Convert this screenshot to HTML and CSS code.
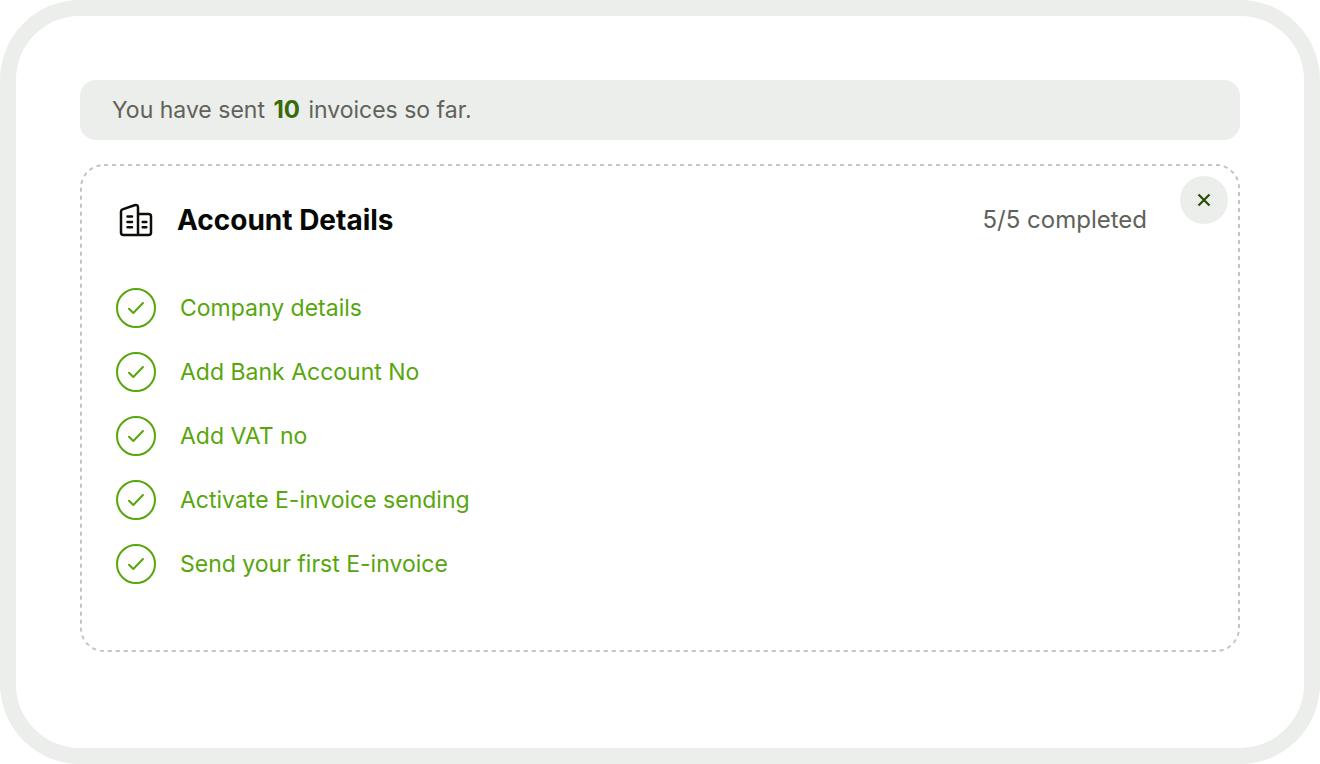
FILE: index.html
```html
<!DOCTYPE html>
<html lang="en">
<head>
<meta charset="utf-8">
<title>Account Details</title>
<link rel="stylesheet" href="styles.css">
</head>
<body>
<svg class="symbols" aria-hidden="true">
  <symbol id="check" viewBox="0 0 40 40">
    <circle cx="20" cy="20" r="19"/>
    <path d="M13 20.800L17.300 25L27 15"/>
  </symbol>
</svg>
<main class="panel">
  <p class="notice">You have sent <strong class="count">10</strong> invoices so far.</p>
  <section class="card">
    <svg class="outline" aria-hidden="true"><rect class="outline-rect" rx="23"/></svg>
    <header class="card-header">
      <svg class="building" viewBox="0 0 40 40" aria-hidden="true">
        <path d="M22 35H7.500Q5 35 5 32.500V11.500Q5 10 6.500 9.400L18.500 5.200Q22 4.200 22 7.500V35H32.500Q35 35 35 32.500V16.500Q35 14 32.500 14H22"/>
        <path d="M11.500 16.500H16M11.500 22H16M11.500 27.200H16M26.700 22H30.300M26.700 27.200H30.300"/>
      </svg>
      <h1 class="title">Account Details</h1>
      <span class="progress">5/5 completed</span>
    </header>
    <button class="close" type="button" aria-label="Close">
      <svg class="close-icon" viewBox="0 0 16 16" aria-hidden="true"><path d="M2.500 2.500L13.500 13.500M13.500 2.500L2.500 13.500"/></svg>
    </button>
    <ul class="steps">
      <li class="step"><svg class="check"><use href="#check"/></svg>Company details</li>
      <li class="step"><svg class="check"><use href="#check"/></svg>Add Bank Account No</li>
      <li class="step"><svg class="check"><use href="#check"/></svg>Add VAT no</li>
      <li class="step"><svg class="check"><use href="#check"/></svg>Activate E-invoice sending</li>
      <li class="step"><svg class="check"><use href="#check"/></svg>Send your first E-invoice</li>
    </ul>
  </section>
</main>
</body>
</html>
```
FILE: styles.css
```css
* { box-sizing: border-box; }
body {
  margin: 0;
  background: #fff;
  color: #5f625b;
  font: 23px/32px Inter, "Liberation Sans", sans-serif;
}
.symbols { position: absolute; width: 0; height: 0; }
.panel {
  display: flex;
  flex-direction: column;
  gap: 24px;
  min-height: 100vh;
  padding: 64px;
  border: 16px solid #eceeeb;
  border-radius: 80px;
}
.notice {
  margin: 0;
  padding: 14px 32px;
  border-radius: 16px;
  background: #eceeeb;
}
.count { margin: 0 2px; color: #396a0b; font-size: 24px; font-weight: 700; }
.card { position: relative; padding: 36px; padding-bottom: 68px; }
.outline { position: absolute; inset: 0; width: 100%; height: 100%; }
.outline-rect {
  x: 1px;
  y: 1px;
  width: calc(100% - 2px);
  height: calc(100% - 2px);
  fill: none;
  stroke: #c4c4c4;
  stroke-width: 2;
  stroke-dasharray: 4 4;
}
.card-header { display: flex; align-items: center; padding-right: 57px; }
.building {
  width: 40px;
  height: 40px;
  fill: none;
  stroke: #0c0f08;
  stroke-width: 2.5;
  stroke-linecap: round;
  stroke-linejoin: round;
}
.title { margin: 0 auto 0 21px; color: #060804; font-size: 28px; line-height: 40px; font-weight: 700; }
.progress { font-size: 24px; }
.close {
  position: absolute;
  top: 12px;
  right: 12px;
  display: grid;
  place-items: center;
  width: 48px;
  height: 48px;
  padding: 0;
  border: 0;
  border-radius: 50%;
  background: #eceeeb;
  cursor: pointer;
}
.close-icon { width: 16px; height: 16px; stroke: #294d08; stroke-width: 2.2; }
.steps {
  display: grid;
  gap: 24px;
  margin: 48px 0 0;
  padding: 0;
  list-style: none;
}
.step { display: flex; align-items: center; gap: 24px; color: #57a60c; }
.check {
  width: 40px;
  height: 40px;
  fill: none;
  stroke: currentColor;
  stroke-width: 2;
  stroke-linecap: round;
  stroke-linejoin: round;
}
```
